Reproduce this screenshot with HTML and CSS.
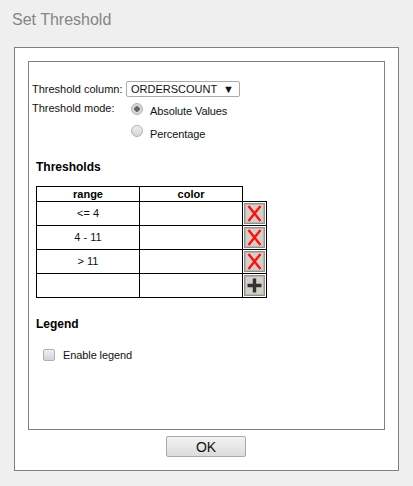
FILE: index.html
```html
<!DOCTYPE html>
<html>
	<head>
		<meta charset="utf-8">
		<title>Set Threshold</title>
		<link rel="stylesheet" href="styles.css">
	</head>
	<body>
		<h1 class="title">Set Threshold</h1>
		<div class="dialog">
			<div class="content">
				<div class="row">
					<span class="label">Threshold column:</span>
					<div class="picker"><span>ORDERSCOUNT</span><span class="arrow">▼</span></div>
				</div>
				<div class="modeRow">
					<span class="label">Threshold mode:</span>
					<div class="modes">
						<label class="mode"><input type="radio" name="mode" checked><span>Absolute Values</span></label>
						<label class="mode"><input type="radio" name="mode"><span>Percentage</span></label>
					</div>
				</div>
				<h3 class="thHead">Thresholds</h3>
				<table class="thTable">
					<tr><th>range</th><th>color</th><th class="blank"></th></tr>
					<tr>
						<td><div class="cellText">&lt;= 4</div></td><td></td>
						<td class="act"><button class="iconBtn"><svg width="17" height="17" viewBox="0 0 17 17"><path d="M2.5 1L14.5 16M14.5 1L2.5 16" stroke="#ff0f0f" stroke-width="2.4" fill="none"/></svg></button></td>
					</tr>
					<tr>
						<td><div class="cellText">4 - 11</div></td><td></td>
						<td class="act"><button class="iconBtn"><svg width="17" height="17" viewBox="0 0 17 17"><path d="M2.5 1L14.5 16M14.5 1L2.5 16" stroke="#ff0f0f" stroke-width="2.4" fill="none"/></svg></button></td>
					</tr>
					<tr>
						<td><div class="cellText">&gt; 11</div></td><td></td>
						<td class="act"><button class="iconBtn"><svg width="17" height="17" viewBox="0 0 17 17"><path d="M2.5 1L14.5 16M14.5 1L2.5 16" stroke="#ff0f0f" stroke-width="2.4" fill="none"/></svg></button></td>
					</tr>
					<tr>
						<td></td><td></td>
						<td class="act"><button class="iconBtn"><svg width="17" height="17" viewBox="0 0 17 17"><path d="M1.5 8.5H15.5M8.5 1.5V15.5" stroke="#333" stroke-width="3.4" fill="none"/></svg></button></td>
					</tr>
				</table>
				<h3 class="legendHead">Legend</h3>
				<label class="enable"><input type="checkbox"><span>Enable legend</span></label>
			</div>
			<div class="footer">
				<button class="okBtn">OK</button>
			</div>
		</div>
	</body>
</html>
```

FILE: styles.css
```css
html,body{
	margin: 0;
	height: 100%;
}
body{
	background-color: #efefef;
	font-family: "Liberation Sans", Arial, sans-serif;
	font-size: 11px;
	color: #111;
	overflow: hidden;
}
.title{
	margin: 0;
	height: 47px;
	padding: 10px 0 0 12px;
	box-sizing: border-box;
	font-size: 16px;
	line-height: 20px;
	font-weight: normal;
	color: #858585;
}
.dialog{
	width: 385px;
	height: 424px;
	margin-left: 14px;
	box-sizing: border-box;
	padding: 13px;
	background-color: #fff;
	border: 1px solid #808080;
}
.content{
	width: 357px;
	height: 369px;
	box-sizing: border-box;
	padding: 18px 0 0 3px;
	border: 1px solid #808080;
}
.row{
	display: flex;
	align-items: center;
	height: 17px;
}
.label{
	width: 94px;
	flex: none;
}
.picker{
	display: flex;
	justify-content: space-between;
	align-items: center;
	width: 114px;
	height: 16px;
	box-sizing: border-box;
	padding: 0 5px 0 4px;
	background-color: #fff;
	border: 1px solid #aaa;
	border-radius: 2px;
}
.arrow{font-size: 11px;}
.modeRow{
	display: flex;
	margin-top: 4px;
}
.modeRow .label{line-height: 14px;}
.modes{
	display: flex;
	flex-direction: column;
	gap: 9px;
	padding: 1px 0 0 5px;
}
.mode{
	display: flex;
	align-items: center;
	gap: 7px;
	height: 13px;
	letter-spacing: -0.1px;
}
.mode span{padding-top: 4px;}
.mode:last-child span{padding-top: 6px;}
input[type=radio],input[type=checkbox]{
	appearance: none;
	margin: 0;
	width: 12px;
	height: 12px;
	box-sizing: border-box;
	border: 1px solid #b0b0b0;
	background: linear-gradient(#f0f0f0,#d4d4d4);
	flex: none;
}
input[type=radio]{border-radius: 50%;}
input[type=radio]:checked{
	background: radial-gradient(circle,#666 0,#666 2.5px,#d8d8d8 3px);
}
input[type=checkbox]{border-radius: 2px;}
.thHead,.legendHead{
	margin: 0;
	font-size: 12px;
	line-height: 14px;
	color: #000;
}
.thHead{padding: 23px 0 0 4px;}
.thTable{
	border-collapse: collapse;
	margin: 12px 0 0 4px;
	table-layout: fixed;
	width: 230px;
	color: #111;
}
.thTable th{
	height: 14px;
	padding: 0;
	width: 102px;
	border: 1px solid #000;
	font-size: 11px;
	line-height: 14px;
	color: #000;
}
.thTable th.blank{
	width: 23px;
	border: none;
}
.thTable td{
	height: 23px;
	padding: 0;
	border: 1px solid #000;
	text-align: center;
}
.cellText{
	line-height: 13px;
	margin-bottom: 1px;
}
.thTable td.act{
	line-height: 0;
}
.iconBtn{
	display: inline-flex;
	justify-content: center;
	align-items: center;
	width: 21px;
	height: 21px;
	padding: 0;
	background-color: #d4d0c8;
	border: 1px solid #8f8f8f;
	box-shadow: inset 0 0 0 1px #b8b5ae;
}
.legendHead{padding: 19px 0 0 4px;}
.enable{
	display: flex;
	align-items: center;
	gap: 8px;
	margin: 18px 0 0 11px;
	letter-spacing: -0.1px;
}
.footer{
	display: flex;
	justify-content: center;
	padding: 6px 1px 0 0;
}
.okBtn{
	width: 80px;
	height: 21px;
	padding: 0;
	background: linear-gradient(#f2f2f2,#dcdcdc);
	border: 1px solid #a8a8a8;
	border-radius: 2px;
	font-family: "Liberation Sans", Arial, sans-serif;
	font-size: 14px;
	color: #111;
}
```
